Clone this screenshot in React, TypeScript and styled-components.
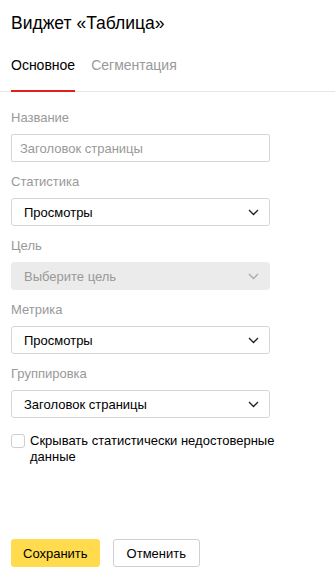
import styled, { createGlobalStyle } from 'styled-components';

const GlobalStyle = createGlobalStyle`
  html, body {
    margin: 0;
    padding: 0;
    background: #ffffff;
  }
  body {
    font-family: "Liberation Sans", Arial, sans-serif;
    color: #000;
  }
`;

const Panel = styled.div`
  width: 335px;
  min-height: 580px;
  display: flex;
  flex-direction: column;
  box-sizing: border-box;
`;

const Title = styled.h1`
  margin: 0;
  padding: 11px 11px 0;
  font-size: 17.5px;
  line-height: 24px;
  font-weight: normal;
  color: #000;
`;

const Tabs = styled.div`
  display: flex;
  gap: 16px;
  margin-top: 20px;
  padding: 0 11px;
  border-bottom: 1px solid #e6e6e6;
`;

const Tab = styled.div<{ $active?: boolean }>`
  font-size: 14px;
  line-height: 20px;
  padding-bottom: 15px;
  margin-bottom: -1px;
  color: ${(p) => (p.$active ? '#000' : '#999')};
  border-bottom: 2px solid ${(p) => (p.$active ? '#e0201b' : 'transparent')};
`;

const Form = styled.div`
  display: flex;
  flex-direction: column;
  gap: 12px;
  padding: 18px 11px 0;
`;

const Field = styled.div`
  display: flex;
  flex-direction: column;
  gap: 8px;
  width: 259px;
`;

const Label = styled.div`
  font-size: 13px;
  line-height: 16px;
  color: #999;
`;

const Input = styled.div`
  height: 28px;
  box-sizing: border-box;
  border: 1px solid #d6d6d6;
  border-radius: 2px;
  padding: 0 8px;
  display: flex;
  align-items: center;
  font-size: 13px;
  color: #999;
`;

const Select = styled.div<{ $disabled?: boolean }>`
  height: 28px;
  box-sizing: border-box;
  border: 1px solid ${(p) => (p.$disabled ? '#ebebeb' : '#d6d6d6')};
  background: ${(p) => (p.$disabled ? '#ebebeb' : '#fff')};
  border-radius: 3px;
  padding: 0 10px 0 12px;
  display: flex;
  align-items: center;
  justify-content: space-between;
  font-size: 13px;
  color: ${(p) => (p.$disabled ? '#999' : '#000')};
`;

const CheckRow = styled.label`
  display: flex;
  align-items: flex-start;
  gap: 5px;
  margin-top: 3px;
  width: 290px;
  font-size: 13px;
  line-height: 16px;
  color: #000;
`;

const Box = styled.span`
  flex: none;
  width: 14px;
  height: 14px;
  box-sizing: border-box;
  border: 1px solid #cfcfcf;
  border-radius: 3px;
  margin-top: 1px;
`;

const Footer = styled.div`
  margin-top: auto;
  display: flex;
  gap: 13px;
  padding: 0 11px 13px;
`;

const Button = styled.button<{ $primary?: boolean }>`
  height: 28px;
  box-sizing: border-box;
  padding: 0 ${(p) => (p.$primary ? '11px' : '13px')};
  border-radius: 3px;
  border: 1px solid ${(p) => (p.$primary ? '#ffdb4d' : '#d0d0d0')};
  background: ${(p) => (p.$primary ? '#ffdb4d' : '#fff')};
  font-family: "Liberation Sans", Arial, sans-serif;
  font-size: 13px;
  color: #000;
`;

function Chevron({ muted }: { muted?: boolean }) {
  return (
    <svg width="11" height="7" viewBox="0 0 11 7">
      <polyline
        points="1,1 5.5,5.5 10,1"
        fill="none"
        stroke={muted ? '#aaa' : '#222'}
        strokeWidth="1.3"
      />
    </svg>
  );
}

const fields = [
  { label: 'Статистика', value: 'Просмотры' },
  { label: 'Цель', value: 'Выберите цель', disabled: true },
  { label: 'Метрика', value: 'Просмотры' },
  { label: 'Группировка', value: 'Заголовок страницы' },
];

export default function App() {
  return (
    <>
      <GlobalStyle />
      <Panel>
        <Title>Виджет «Таблица»</Title>
        <Tabs>
          <Tab $active>Основное</Tab>
          <Tab>Сегментация</Tab>
        </Tabs>
        <Form>
          <Field>
            <Label>Название</Label>
            <Input>Заголовок страницы</Input>
          </Field>
          {fields.map((f) => (
            <Field key={f.label}>
              <Label>{f.label}</Label>
              <Select $disabled={f.disabled}>
                <span>{f.value}</span>
                <Chevron muted={f.disabled} />
              </Select>
            </Field>
          ))}
          <CheckRow>
            <Box />
            <span>Скрывать статистически недостоверные данные</span>
          </CheckRow>
        </Form>
        <Footer>
          <Button $primary>Сохранить</Button>
          <Button>Отменить</Button>
        </Footer>
      </Panel>
    </>
  );
}
